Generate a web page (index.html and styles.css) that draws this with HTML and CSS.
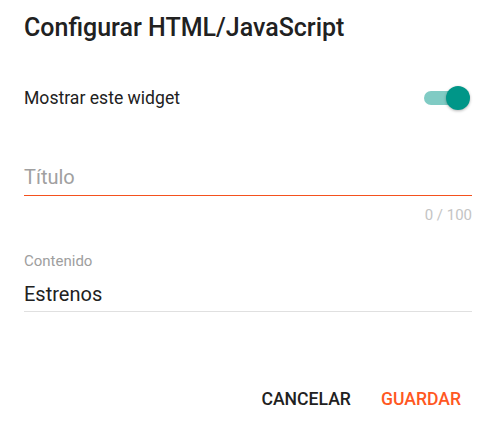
FILE: index.html
```html
<!DOCTYPE html>
<html>
<head>
  <meta charset="UTF-8">
  <title>Configurar HTML/JavaScript</title>
  <link rel="stylesheet" href="styles.css">
</head>
<body>
  <div class="dialog">
    <h2 class="dialog-title">Configurar HTML/JavaScript</h2>

    <div class="toggle-row">
      <span class="toggle-label">Mostrar este widget</span>
      <span class="switch">
        <span class="switch-track"></span>
        <span class="switch-thumb"></span>
      </span>
    </div>

    <div class="field field-focused">
      <div class="field-input placeholder">Título</div>
    </div>
    <div class="counter">0 / 100</div>

    <div class="field">
      <div class="field-label">Contenido</div>
      <div class="field-input">Estrenos</div>
    </div>

    <div class="actions">
      <button class="btn">CANCELAR</button>
      <button class="btn btn-primary">GUARDAR</button>
    </div>
  </div>
</body>
</html>
```

FILE: styles.css
```css
body {
  margin: 0;
  font-family: Roboto, "Liberation Sans", sans-serif;
  color: #212121;
  background-color: #fff;
}
.dialog {
  padding: 13px 23px 0 24px;
}
.dialog-title {
  margin: 0;
  font-size: 25px;
  font-weight: 500;
  line-height: 30px;
}
.toggle-row {
  display: flex;
  align-items: center;
  justify-content: space-between;
  margin-top: 41px;
  height: 28px;
}
.toggle-label {
  font-size: 17.6px;
}
.switch {
  position: relative;
  width: 46px;
  height: 24px;
  margin-right: 2px;
}
.switch-track {
  position: absolute;
  left: 0;
  top: 5px;
  width: 40px;
  height: 14px;
  border-radius: 7px;
  background-color: #80cbc4;
}
.switch-thumb {
  position: absolute;
  right: 0;
  top: 0;
  width: 24px;
  height: 24px;
  border-radius: 50%;
  background-color: #009688;
  box-shadow: 0 1px 3px rgba(0, 0, 0, 0.3);
}
.field {
  border-bottom: 1px solid #e0e0e0;
}
.field-focused {
  margin-top: 51px;
  border-bottom-color: #f4511e;
}
.field-focused .field-input {
  padding-bottom: 4px;
}
.field-input {
  font-size: 20px;
  line-height: 28px;
  padding-bottom: 3px;
}
.placeholder {
  color: #a0a0a0;
}
.counter {
  text-align: right;
  font-size: 15px;
  line-height: 20px;
  color: #c4c4c4;
  margin-top: 9px;
}
.field-label {
  margin-top: 26px;
  font-size: 15px;
  line-height: 20px;
  color: #9e9e9e;
}
.field-label + .field-input {
  margin-top: 9px;
}
.actions {
  display: flex;
  justify-content: flex-end;
  margin-top: 71px;
  margin-right: 3px;
}
.btn {
  font-family: Roboto, "Liberation Sans", sans-serif;
  font-size: 17.6px;
  font-weight: 500;
  padding: 6px 8px;
  margin-left: 14px;
  border: none;
  background: none;
  color: #212121;
  cursor: pointer;
}
.btn-primary {
  color: #ff5722;
}
```
